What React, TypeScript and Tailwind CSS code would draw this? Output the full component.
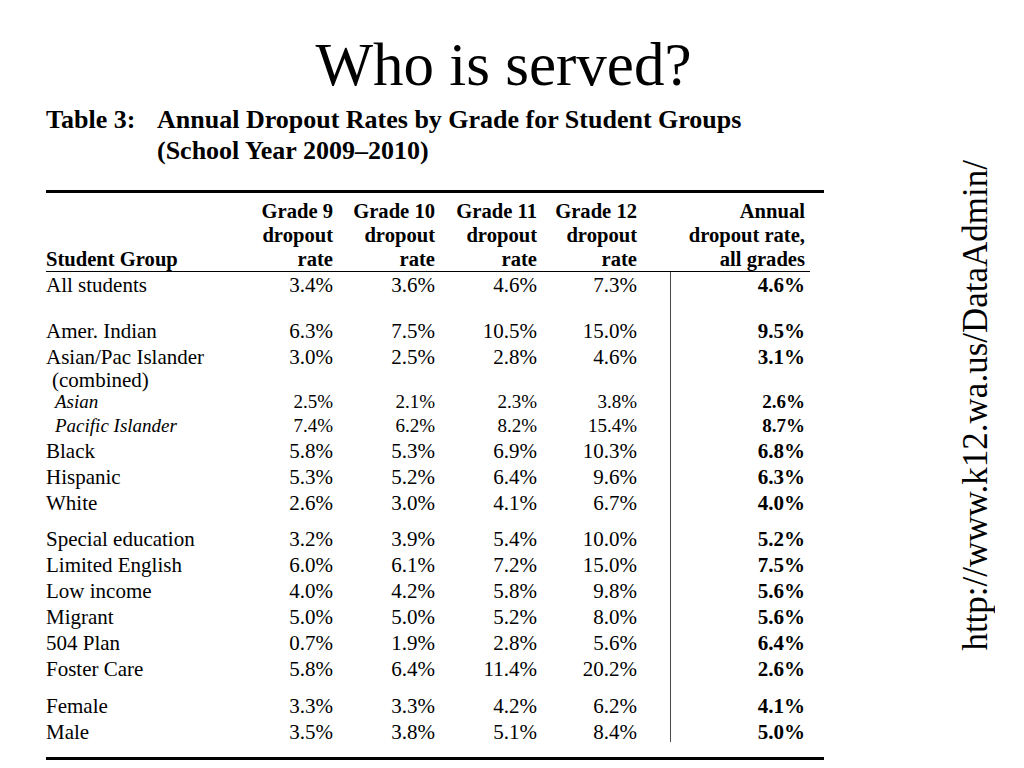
import React from "react";

type Entry =
  | {
      kind: "row";
      label: string;
      vals?: string[];
      annual?: string;
      variant?: "normal" | "sub" | "note";
      size: string;
      lineEnd?: string;
    }
  | { kind: "gap"; size: string };

const cols =
  "grid grid-cols-[190px_97px_102px_102px_100px_34px_134px_19px]";

const entries: Entry[] = [
  { kind: "row", label: "All students", vals: ["3.4%", "3.6%", "4.6%", "7.3%"], annual: "4.6%", size: "h-[26px] leading-[26px]" },
  { kind: "gap", size: "h-[20px]" },
  { kind: "row", label: "Amer. Indian", vals: ["6.3%", "7.5%", "10.5%", "15.0%"], annual: "9.5%", size: "h-[26px] leading-[26px]" },
  { kind: "row", label: "Asian/Pac Islander", vals: ["3.0%", "2.5%", "2.8%", "4.6%"], annual: "3.1%", size: "h-[26px] leading-[26px]" },
  { kind: "row", label: "(combined)", variant: "note", size: "h-[20px] leading-[20px]" },
  { kind: "row", label: "Asian", vals: ["2.5%", "2.1%", "2.3%", "3.8%"], annual: "2.6%", variant: "sub", size: "h-[24px] leading-[24px]" },
  { kind: "row", label: "Pacific Islander", vals: ["7.4%", "6.2%", "8.2%", "15.4%"], annual: "8.7%", variant: "sub", size: "h-[24px] leading-[24px]" },
  { kind: "row", label: "Black", vals: ["5.8%", "5.3%", "6.9%", "10.3%"], annual: "6.8%", size: "h-[26px] leading-[26px]" },
  { kind: "row", label: "Hispanic", vals: ["5.3%", "5.2%", "6.4%", "9.6%"], annual: "6.3%", size: "h-[26px] leading-[26px]" },
  { kind: "row", label: "White", vals: ["2.6%", "3.0%", "4.1%", "6.7%"], annual: "4.0%", size: "h-[26px] leading-[26px]" },
  { kind: "gap", size: "h-[10px]" },
  { kind: "row", label: "Special education", vals: ["3.2%", "3.9%", "5.4%", "10.0%"], annual: "5.2%", size: "h-[26px] leading-[26px]" },
  { kind: "row", label: "Limited English", vals: ["6.0%", "6.1%", "7.2%", "15.0%"], annual: "7.5%", size: "h-[26px] leading-[26px]" },
  { kind: "row", label: "Low income", vals: ["4.0%", "4.2%", "5.8%", "9.8%"], annual: "5.6%", size: "h-[26px] leading-[26px]" },
  { kind: "row", label: "Migrant", vals: ["5.0%", "5.0%", "5.2%", "8.0%"], annual: "5.6%", size: "h-[26px] leading-[26px]" },
  { kind: "row", label: "504 Plan", vals: ["0.7%", "1.9%", "2.8%", "5.6%"], annual: "6.4%", size: "h-[26px] leading-[26px]" },
  { kind: "row", label: "Foster Care", vals: ["5.8%", "6.4%", "11.4%", "20.2%"], annual: "2.6%", size: "h-[26px] leading-[26px]" },
  { kind: "gap", size: "h-[11px]" },
  { kind: "row", label: "Female", vals: ["3.3%", "3.3%", "4.2%", "6.2%"], annual: "4.1%", size: "h-[26px] leading-[26px]" },
  { kind: "row", label: "Male", vals: ["3.5%", "3.8%", "5.1%", "8.4%"], annual: "5.0%", size: "h-[26px] leading-[26px]", lineEnd: "h-[23px]" },
];

function Divider({ end }: { end?: string }) {
  return (
    <div className="flex justify-end">
      <div className={`border-r border-[#4a4a4a] ${end ?? "h-full"}`} />
    </div>
  );
}

function TableRow({ e }: { e: Entry }) {
  if (e.kind === "gap") {
    return (
      <div className={`${cols} ${e.size}`}>
        <div className="col-span-5" />
        <Divider />
        <div className="col-span-2" />
      </div>
    );
  }
  const text = e.variant === "sub" ? "text-[19px]" : "text-[21px]";
  const labelCls =
    e.variant === "sub"
      ? "italic pl-[9px]"
      : e.variant === "note"
      ? "pl-[6px]"
      : "";
  return (
    <div className={`${cols} ${e.size} ${text}`}>
      <div className={`whitespace-nowrap ${labelCls}`}>{e.label}</div>
      {(e.vals ?? ["", "", "", ""]).map((v, i) => (
        <div key={i} className="text-right whitespace-nowrap">
          {v}
        </div>
      ))}
      <Divider end={e.lineEnd} />
      <div className="text-right font-bold">{e.annual ?? ""}</div>
      <div />
    </div>
  );
}

export default function App() {
  return (
    <div className="w-[1024px] h-[768px] overflow-hidden bg-white text-black font-['Liberation_Serif','Times_New_Roman',serif]">
      <h1 className="pt-[34px] pr-[17px] text-center text-[61px] leading-[61px]">
        Who is served?
      </h1>

      <div className="flex pt-[9px]">
        <div className="ml-[46px] w-[778px]">
          {/* table caption */}
          <div className="flex text-[26px] leading-[31px] font-bold">
            <span className="w-[111px] shrink-0">Table 3:</span>
            <div>
              <div className="whitespace-nowrap">
                Annual Dropout Rates by Grade for Student Groups
              </div>
              <div>(School Year 2009–2010)</div>
            </div>
          </div>

          <div className="mt-[24px] h-[3px] bg-black" />

          {/* header */}
          <div className={`${cols} pt-[6px] items-end text-[20.6px] leading-[24px] font-bold`}>
            <div className="whitespace-nowrap">Student Group</div>
            <div className="text-right whitespace-nowrap">
              Grade 9<br />dropout<br />rate
            </div>
            <div className="text-right whitespace-nowrap">
              Grade 10<br />dropout<br />rate
            </div>
            <div className="text-right whitespace-nowrap">
              Grade 11<br />dropout<br />rate
            </div>
            <div className="text-right whitespace-nowrap">
              Grade 12<br />dropout<br />rate
            </div>
            <div />
            <div className="text-right whitespace-nowrap">
              Annual<br />dropout rate,<br />all grades
            </div>
            <div />
          </div>
          <div className="h-px w-[764px] bg-black" />

          {entries.map((e, i) => (
            <TableRow key={i} e={e} />
          ))}

          <div className="mt-[12px] h-[3px] bg-black" />
        </div>

        <div className="ml-[134px] mt-[56px]">
          <div className="[writing-mode:vertical-rl] rotate-180 text-[35px] leading-[35px] whitespace-nowrap">
            http://www.k12.wa.us/DataAdmin/
          </div>
        </div>
      </div>
    </div>
  );
}
